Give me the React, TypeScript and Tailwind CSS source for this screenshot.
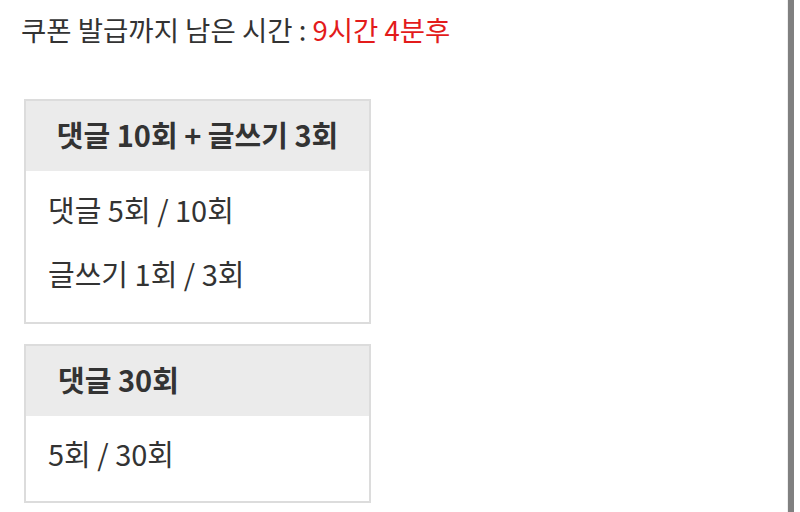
import React from "react";

export default function App() {
  const font = { fontFamily: '"Noto Sans CJK KR", "Noto Sans", sans-serif' };
  return (
    <div className="relative w-[800px] h-[512px] bg-white overflow-hidden text-[#333]" style={font}>
      <div className="absolute right-[6px] top-0 w-[6px] h-full bg-[#808080]" />
      <div className="absolute right-[12px] top-0 w-px h-full bg-[#eeeeee]" />
      <div className="pl-[21px] pt-[10px] text-[27.5px] leading-[38px]">
        쿠폰 발급까지 남은 시간 : <span className="text-[#e31b1b]">9시간 4분후</span>
      </div>
      <div className="flex flex-col gap-[20px] pl-[24px] pt-[51px]">
        <div className="w-[347px] border-2 border-[#dcdcdc]">
          <div className="h-[70px] bg-[#ebebeb] flex items-center justify-center font-bold text-[29px] pb-[3px]">
            댓글 10회 + 글쓰기 3회
          </div>
          <div className="pl-[22px] pt-[18px] pb-[29px] text-[29px] flex flex-col gap-[24px] leading-[40px]">
            <div>댓글 5회 / 10회</div>
            <div>글쓰기 1회 / 3회</div>
          </div>
        </div>
        <div className="w-[347px] border-2 border-[#dcdcdc]">
          <div className="h-[70px] bg-[#ebebeb] flex items-center pl-[32px] font-bold text-[29px] pb-[3px]">
            댓글 30회
          </div>
          <div className="pl-[22px] pt-[17px] pb-[28px] text-[29px] leading-[40px]">
            5회 / 30회
          </div>
        </div>
      </div>
    </div>
  );
}
